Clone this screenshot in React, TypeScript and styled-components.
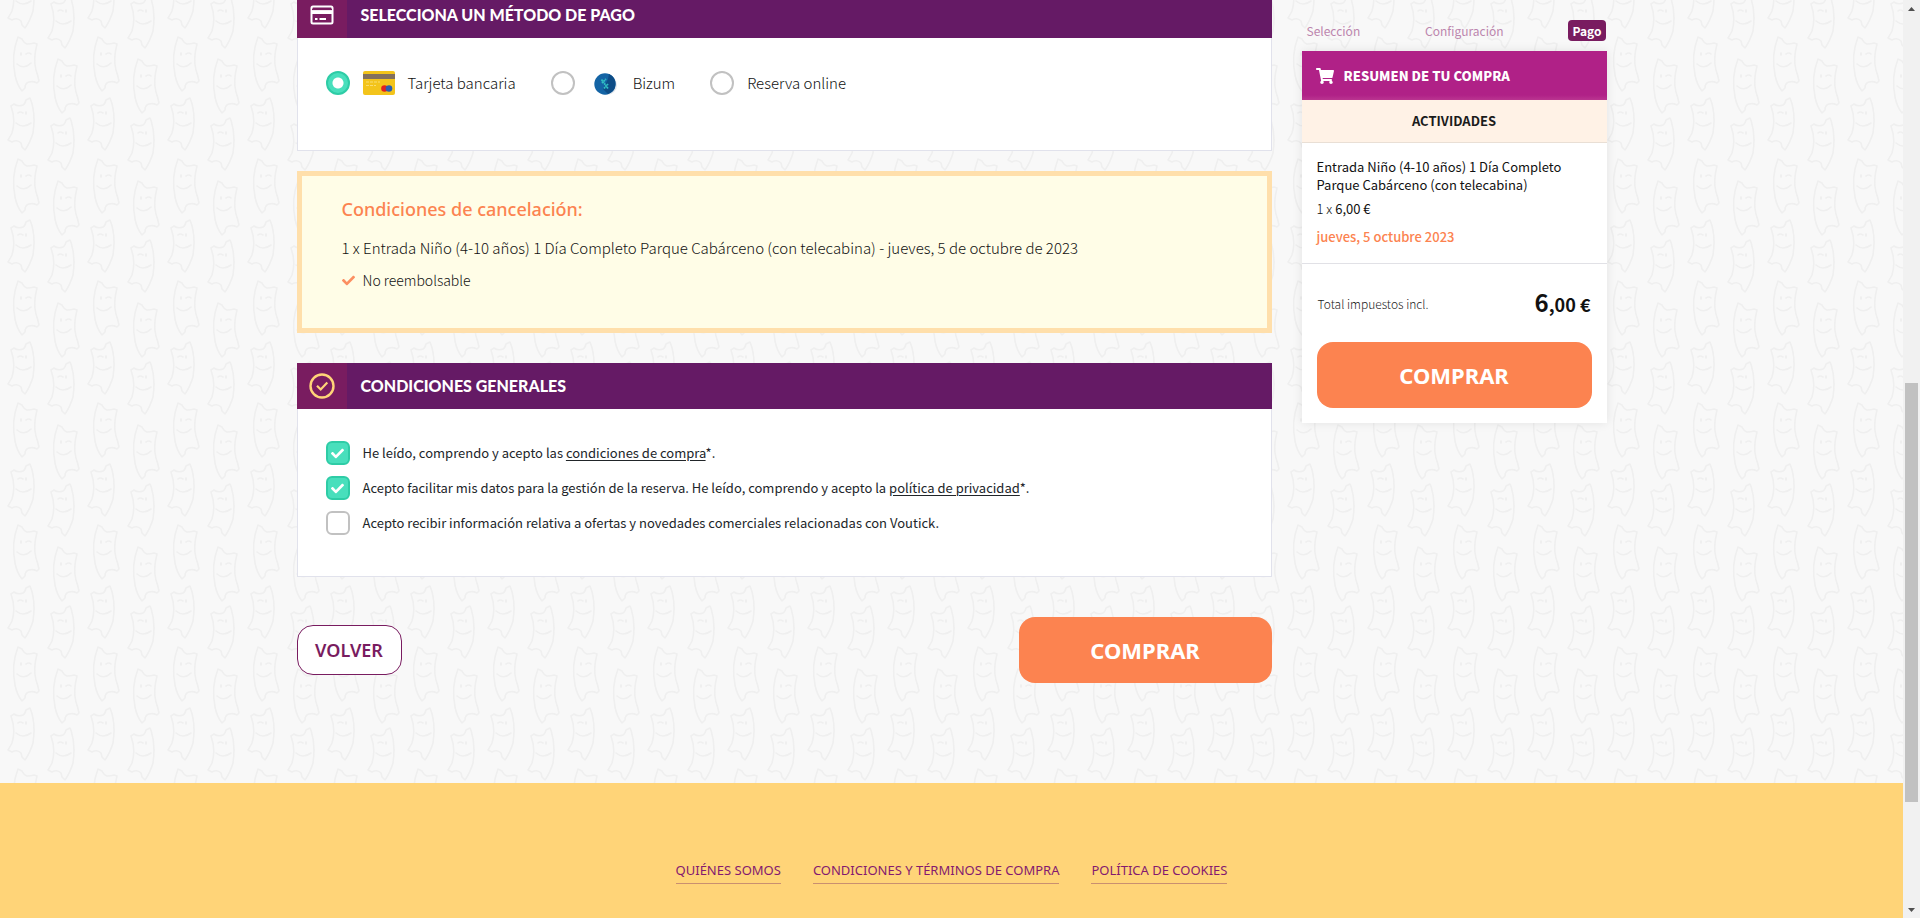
import React, { useState } from "react";
import styled, { createGlobalStyle, css } from "styled-components";
import { FaCheck, FaShoppingCart } from "react-icons/fa";

const sans = `"Noto Sans CJK SC", "Open Sans", sans-serif`;
const humanist = `"Noto Sans", sans-serif`;
const geometric = `Lato, sans-serif`;

const coupon = encodeURIComponent(`
<svg xmlns="http://www.w3.org/2000/svg" width="80" height="122" viewBox="0 0 80 122">
  <defs>
    <g id="a">
      <path d="M5 0L9 2Q11 6 14 7Q18 7 21 6L24 7Q20 22 23 33Q25 39 26 44L24 46Q20 44 16 45Q12 46 12 51L9 54Q4 48 2 38Q-2 18 5 0Z"/>
      <path d="M4 27Q11 33 18 26M13 17Q16 15 18 17"/>
      <ellipse cx="8" cy="17" rx="1" ry="2" fill="#efefef" stroke="none"/>
    </g>
    <g id="b">
      <path d="M22 0L18 2Q17 6 15 7Q10 9 6 6L3 8Q8 22 4 35Q2 39 0 42L4 44Q9 41 13 45L14 49L17 52Q22 45 25 35Q28 14 22 0Z"/>
      <path d="M8 25Q15 31 23 25M10 15Q12 13 15 15"/>
      <ellipse cx="18" cy="15" rx="1" ry="2" fill="#efefef" stroke="none"/>
    </g>
  </defs>
  <g fill="none" stroke="#efefef" stroke-width="1.6" stroke-linejoin="round" stroke-linecap="round">
    <use href="#a" x="13" y="37"/>
    <use href="#b" x="8" y="98"/><use href="#b" x="8" y="-24"/>
    <use href="#a" x="53" y="59"/>
    <use href="#b" x="48" y="118"/><use href="#b" x="48" y="-4"/>
  </g>
</svg>`).replace(/'/g, "%27").replace(/\(/g, "%28").replace(/\)/g, "%29");

const GlobalStyle = createGlobalStyle`
  * { box-sizing: border-box; }
  body { margin: 0; background: #f8f8f8; color: #111; font-family: ${sans}; }
  h2, h3, p { margin: 0; }
  button { cursor: pointer; }
`;

const Shell = styled.div`
  display: flex;
  min-height: 100vh;
`;
const Page = styled.div`
  flex: 1;
  min-width: 0;
  display: flex;
  flex-direction: column;
  overflow: hidden;
  background: #f8f8f8 url("data:image/svg+xml,${coupon}");
`;
const Content = styled.div`
  display: grid;
  grid-template-columns: minmax(0, 1fr) 305px;
  gap: 30px;
  width: 100%;
  max-width: 1310px;
  margin: 0 auto;
  padding-bottom: 100px;
`;
const Main = styled.main`
  margin-top: -8px;
`;

const Section = styled.section<{ $gap: number }>`
  margin-bottom: ${(p) => p.$gap}px;
`;
const SectionHeader = styled.header`
  display: flex;
  align-items: center;
  height: 46px;
  background: #651a65;
  color: #fff;
`;
const IconCell = styled.span`
  display: flex;
  align-items: center;
  justify-content: center;
  width: 50px;
  height: 46px;
  margin-right: 14px;
  background: #791c60;
`;
const SectionTitle = styled.h2`
  font: 900 16px/24px ${geometric};
  text-transform: uppercase;
`;
const SectionBody = styled.div<{ $bottom: number }>`
  padding: 32px 28px ${(p) => p.$bottom}px;
  background: #fff;
  border: 1px solid #e1e2ec;
  border-top: 0;
`;

const PaymentList = styled.div`
  display: flex;
  gap: 35px;
`;
const Payment = styled.label`
  display: flex;
  align-items: center;
  gap: 13px;
  height: 26px;
  font-size: 15px;
  font-weight: 300;
  line-height: 26px;
  cursor: pointer;
`;
const Radio = styled.input`
  appearance: none;
  flex: none;
  width: 24px;
  height: 24px;
  margin: 0;
  border: 2px solid #c1c1c1;
  border-radius: 50%;
  background: #fff;
  &:checked {
    border-color: #2ecca6;
    background: radial-gradient(circle, #fff 5px, #48dfbc 6px);
  }
`;

const Notice = styled.section`
  margin-bottom: 30px;
  padding: 20px 40px 32px;
  border: 5px solid #ffdfab;
  background: #fffde7;
`;
const NoticeTitle = styled.h3`
  margin-bottom: 10px;
  color: #fc8350;
  font: 500 18px/26px ${humanist};
`;
const NoticeText = styled.p`
  font-size: 15px;
  font-weight: 300;
  line-height: 32px;
`;
const NoticeRule = styled(NoticeText)`
  display: flex;
  align-items: center;
  gap: 8px;
  font-size: 14px;
  svg { color: #fc8f62; }
`;

const Consent = styled.div`
  display: flex;
  align-items: center;
  gap: 13px;
  margin-bottom: 11px;
  color: #212529;
  font-size: 13px;
  line-height: 24px;
  a { color: inherit; text-underline-offset: 2px; }
`;
const TickWrap = styled.span`
  display: grid;
  flex: none;
  svg {
    grid-area: 1 / 1;
    place-self: center;
    color: #fff;
    pointer-events: none;
  }
`;
const Tick = styled.input`
  appearance: none;
  grid-area: 1 / 1;
  width: 24px;
  height: 24px;
  margin: 0;
  border: 2px solid #c1c1c1;
  border-radius: 6px;
  background: #fff;
  &:checked {
    border-color: #2ecca6;
    background: #48dfbc;
  }
`;

const Actions = styled.div`
  display: flex;
  align-items: center;
  justify-content: space-between;
`;
const BackButton = styled.button`
  height: 50px;
  width: 105px;
  border: 1px solid #791c60;
  border-radius: 16px;
  background: #fff;
  color: #791c60;
  font: 600 18px/24px ${humanist};
`;
const BuyButton = styled.button<{ $wide?: boolean }>`
  width: ${(p) => (p.$wide ? "100%" : "253px")};
  height: 66px;
  border: 0;
  border-radius: 16px;
  background: #fc8350;
  color: #fff;
  font: 700 22px/28px ${humanist};
`;

const Steps = styled.nav`
  display: flex;
  align-items: center;
  justify-content: space-between;
  height: 21px;
  margin: 20px 1px 10px 5px;
`;
const Step = styled.a<{ $current?: boolean }>`
  color: #bc86ae;
  font-size: 12px;
  line-height: 21px;
  text-decoration: none;
  ${(p) =>
    p.$current &&
    css`
      padding: 0 4px;
      border-radius: 4px;
      background: #791c60;
      color: #fff;
      font-weight: 700;
    `}
`;
const Summary = styled.section`
  background: #fff;
  box-shadow: 0 0 10px rgba(0, 0, 0, 0.09);
`;
const SummaryHeader = styled.header`
  display: flex;
  align-items: center;
  gap: 10px;
  height: 49px;
  padding: 0 14px;
  background: linear-gradient(#b02187 90%, #ba3590);
  color: #fff;
`;
const SummaryTitle = styled.h2`
  font-size: 13px;
  font-weight: 900;
  line-height: 24px;
`;
const Category = styled.h3`
  height: 43px;
  border-bottom: 1px solid #e9dfd5;
  background: #fff2e6;
  color: #1b1b1b;
  font-size: 13px;
  line-height: 42px;
  font-weight: 700;
  text-align: center;
`;
const Item = styled.div`
  padding: 15px 15px 17px;
  border-bottom: 1px solid #e1e1e6;
  font-size: 13px;
  line-height: 18px;
`;
const ItemName = styled.p`
  font-weight: 400;
`;
const ItemPrice = styled.p`
  margin: 6px 0 10px;
  font-weight: 300;
  strong { font-weight: 400; }
`;
const ItemDate = styled.p`
  color: #fc8350;
  font-size: 13px;
  font-weight: 500;
`;
const Total = styled.div`
  display: flex;
  align-items: center;
  justify-content: space-between;
  height: 78px;
  padding: 0 16px;
  color: #222;
  font-size: 12px;
  font-weight: 300;
`;
const Amount = styled.strong`
  color: #111;
  font-size: 18px;
  font-weight: 700;
  line-height: 32px;
`;
const AmountWhole = styled.span`
  font-size: 24px;
`;
const SummaryAction = styled.div`
  padding: 0 15px 15px;
`;

const Footer = styled.footer`
  flex: 1;
  display: flex;
  align-items: flex-start;
  justify-content: center;
  gap: 32px;
  min-height: 135px;
  padding-top: 76px;
  background: #ffd478;
`;
const FooterLink = styled.a`
  padding-bottom: 2px;
  border-bottom: 1px solid #c98f70;
  color: #84196f;
  font: 400 13px/22px ${humanist};
  text-decoration: none;
  text-transform: uppercase;
`;

const Scrollbar = styled.div`
  position: sticky;
  top: 0;
  display: flex;
  flex: none;
  flex-direction: column;
  width: 17px;
  height: 100vh;
  background: #f1f1f1;
`;
const Arrow = styled.span`
  display: flex;
  align-items: center;
  justify-content: center;
  height: 17px;
`;
const Track = styled.span<{ $grow: number }>`
  flex: ${(p) => p.$grow} 1 0;
`;
const Thumb = styled(Track)`
  margin: 0 2px;
  background: #c1c1c1;
`;

const CardOutline = () => (
  <svg width="24" height="20" viewBox="0 0 24 20" fill="none" aria-hidden="true">
    <rect x="1.5" y="1.5" width="21" height="17" rx="1.5" stroke="#fff" strokeWidth="2" />
    <path d="M2 6.5H22" stroke="#fff" strokeWidth="5" />
    <path d="M2 4.5H22" stroke="#791c60" strokeWidth="1.2" />
    <path d="M5 14H7.500M9.500 14H16" stroke="#fff" strokeWidth="2" />
  </svg>
);
const CheckCircle = () => (
  <svg width="26" height="26" viewBox="0 0 26 26" fill="none" stroke="#ffd478" aria-hidden="true">
    <circle cx="13" cy="13" r="11.5" strokeWidth="2.4" />
    <path d="M8 12.700L11.7 16.500L18.3 9.5" strokeWidth="2.2" />
  </svg>
);
const BankCard = () => (
  <svg width="32" height="24" viewBox="0 0 32 24" aria-hidden="true">
    <rect width="32" height="24" rx="2" fill="#f3c41b" />
    <rect y="3" width="32" height="5" fill="#83705e" />
    <path d="M3 11H17M3 14.500H13" stroke="#f9dd72" strokeDasharray="3 1" />
    <circle cx="21.5" cy="17.5" r="3.3" fill="#e02020" />
    <circle cx="26" cy="17.5" r="3.3" fill="#2a5db0" />
  </svg>
);
const BizumLogo = () => (
  <svg width="32" height="26" viewBox="0 0 32 26" aria-hidden="true">
    <circle cx="19" cy="15" r="10" fill="#e3e6ea" />
    <circle cx="17" cy="14" r="10.700" fill="#1464a5" />
    <path d="M21 4A10.700 10.700 0 0 1 20 24L15 19L20 9Z" fill="#0d4c86" />
    <path d="M13.500 9.500L20 18.500M14 13L18 9M16 18.500L20 14" stroke="#30bfc4" strokeWidth="1.8" strokeDasharray="1.8 .5" />
  </svg>
);

const methods = [
  { id: "card", label: "Tarjeta bancaria", icon: <BankCard /> },
  { id: "bizum", label: "Bizum", icon: <BizumLogo /> },
  { id: "reserve", label: "Reserva online", icon: null },
];

const consents = [
  { id: "terms", before: "He leído, comprendo y acepto las ", link: "condiciones de compra", after: "*." },
  {
    id: "privacy",
    before: "Acepto facilitar mis datos para la gestión de la reserva. He leído, comprendo y acepto la ",
    link: "política de privacidad",
    after: "*.",
  },
  {
    id: "news",
    before: "Acepto recibir información relativa a ofertas y novedades comerciales relacionadas con Voutick.",
    link: "",
    after: "",
  },
];

export default function App() {
  const [method, setMethod] = useState("card");
  const [accepted, setAccepted] = useState<Record<string, boolean>>({ terms: true, privacy: true });

  return (
    <Shell>
      <GlobalStyle />
      <Page>
        <Content>
          <Main>
            <Section $gap={20}>
              <SectionHeader>
                <IconCell><CardOutline /></IconCell>
                <SectionTitle>Selecciona un método de pago</SectionTitle>
              </SectionHeader>
              <SectionBody $bottom={54}>
                <PaymentList>
                  {methods.map((m) => (
                    <Payment key={m.id}>
                      <Radio type="radio" name="method" checked={method === m.id} onChange={() => setMethod(m.id)} />
                      {m.icon}
                      {m.label}
                    </Payment>
                  ))}
                </PaymentList>
              </SectionBody>
            </Section>

            <Notice>
              <NoticeTitle>Condiciones de cancelación:</NoticeTitle>
              <NoticeText>
                1 x Entrada Niño (4-10 años) 1 Día Completo Parque Cabárceno (con telecabina) - jueves, 5 de octubre de 2023
              </NoticeText>
              <NoticeRule><FaCheck size={13} />No reembolsable</NoticeRule>
            </Notice>

            <Section $gap={40}>
              <SectionHeader>
                <IconCell><CheckCircle /></IconCell>
                <SectionTitle>Condiciones generales</SectionTitle>
              </SectionHeader>
              <SectionBody $bottom={30}>
                {consents.map((c) => (
                  <Consent key={c.id}>
                    <TickWrap>
                      <Tick
                        id={c.id}
                        type="checkbox"
                        checked={!!accepted[c.id]}
                        onChange={(e) => setAccepted({ ...accepted, [c.id]: e.target.checked })}
                      />
                      {accepted[c.id] && <FaCheck size={13} />}
                    </TickWrap>
                    <label htmlFor={c.id}>
                      {c.before}
                      {c.link && <a href="#">{c.link}</a>}
                      {c.after}
                    </label>
                  </Consent>
                ))}
              </SectionBody>
            </Section>

            <Actions>
              <BackButton type="button">VOLVER</BackButton>
              <BuyButton type="button">COMPRAR</BuyButton>
            </Actions>
          </Main>

          <aside>
            <Steps>
              <Step href="#">Selección</Step>
              <Step href="#">Configuración</Step>
              <Step href="#" $current>Pago</Step>
            </Steps>
            <Summary>
              <SummaryHeader>
                <FaShoppingCart size={18} />
                <SummaryTitle>RESUMEN DE TU COMPRA</SummaryTitle>
              </SummaryHeader>
              <Category>ACTIVIDADES</Category>
              <Item>
                <ItemName>Entrada Niño (4-10 años) 1 Día Completo Parque Cabárceno (con telecabina)</ItemName>
                <ItemPrice>1 x <strong>6,00 €</strong></ItemPrice>
                <ItemDate>jueves, 5 octubre 2023</ItemDate>
              </Item>
              <Total>
                Total impuestos incl.
                <Amount><AmountWhole>6</AmountWhole>,00 €</Amount>
              </Total>
              <SummaryAction>
                <BuyButton type="button" $wide>COMPRAR</BuyButton>
              </SummaryAction>
            </Summary>
          </aside>
        </Content>

        <Footer>
          <FooterLink href="#">Quiénes somos</FooterLink>
          <FooterLink href="#">Condiciones y términos de compra</FooterLink>
          <FooterLink href="#">Política de cookies</FooterLink>
        </Footer>
      </Page>

      <Scrollbar aria-hidden="true">
        <Arrow><svg width="7" height="4"><path d="M0 4L3.500 0L7 4Z" fill="#505050" /></svg></Arrow>
        <Track $grow={366} />
        <Thumb $grow={419} />
        <Track $grow={99} />
        <Arrow><svg width="7" height="4"><path d="M0 0L3.500 4L7 0Z" fill="#505050" /></svg></Arrow>
      </Scrollbar>
    </Shell>
  );
}
